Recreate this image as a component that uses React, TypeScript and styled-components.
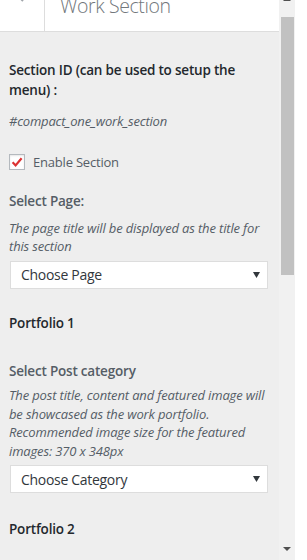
import React from "react";
import styled, { createGlobalStyle } from "styled-components";

const GlobalStyle = createGlobalStyle`
  html, body {
    margin: 0;
    padding: 0;
    background: #ffffff;
  }
  body {
    font-family: "Open Sans", "Noto Sans", sans-serif;
  }
`;

interface SelectFieldProps {
  value: string;
}

const SelectField = ({ value }: SelectFieldProps) => {
  return (
    <SelectBox>
      <SelectValue>{value}</SelectValue>
      <svg width="7" height="6" viewBox="0 0 7 6">
        <path d="M0 0 H7 L3.5 6 Z" fill="#32373c" />
      </svg>
    </SelectBox>
  );
};

const App = () => {
  return (
    <>
      <GlobalStyle />
      <Screen>
        <Panel>
          <Header>
            <BackButton>
              <svg width="44" height="31" viewBox="0 0 44 31">
                <path
                  d="M28 -14 L17 -5 L23 1"
                  fill="none"
                  stroke="#a0a5aa"
                  strokeWidth="2"
                />
              </svg>
            </BackButton>
            <HeaderTitle>Work Section</HeaderTitle>
          </Header>

          <Content>
            <ControlTitle $tone="dark">
              Section ID (can be used to setup the menu) :
            </ControlTitle>
            <IdText>#compact_one_work_section</IdText>

            <CheckRow>
              <CheckBox>
                <svg width="14" height="14" viewBox="0 0 14 14">
                  <path
                    d="M2.6 7.2 L5.6 10.4 L11.6 3.2"
                    fill="none"
                    stroke="#dc3232"
                    strokeWidth="2.2"
                  />
                </svg>
              </CheckBox>
              <CheckLabel>Enable Section</CheckLabel>
            </CheckRow>

            <ControlTitle $tone="muted" $top={22}>
              Select Page:
            </ControlTitle>
            <Description $top={7}>
              The page title will be displayed as the title for this section
            </Description>
            <SelectField value="Choose Page" />

            <SectionHeading $top={24}>Portfolio 1</SectionHeading>

            <ControlTitle $tone="muted" $top={29}>
              Select Post category
            </ControlTitle>
            <Description $top={5}>
              The post title, content and featured image will be showcased as
              the work portfolio. Recommended image size for the featured
              images: 370 x 348px
            </Description>
            <SelectField value="Choose Category" />

            <SectionHeading $top={26}>Portfolio 2</SectionHeading>
          </Content>
        </Panel>

        <ScrollTrack>
          <ArrowSlot>
            <svg width="8" height="5" viewBox="0 0 8 5">
              <path d="M0 5 H8 L4 1 Z" fill="#505050" />
            </svg>
          </ArrowSlot>
          <ScrollThumb />
          <ArrowSlot $bottom>
            <svg width="8" height="5" viewBox="0 0 8 5">
              <path d="M0 0 H8 L4 4 Z" fill="#505050" />
            </svg>
          </ArrowSlot>
        </ScrollTrack>
        <Gutter />
      </Screen>
    </>
  );
};

export default App;

const Screen = styled.div`
  width: 307px;
  height: 560px;
  display: flex;
  overflow: hidden;
`;

const Panel = styled.div`
  width: 279px;
  height: 100%;
  display: flex;
  flex-direction: column;
  background: #eeeeee;
  overflow: hidden;
`;

const Header = styled.div`
  height: 31px;
  flex-shrink: 0;
  display: flex;
  align-items: flex-start;
  background: #ffffff;
  border-bottom: 1px solid #dddddd;
  overflow: hidden;
`;

const BackButton = styled.div`
  width: 44px;
  height: 100%;
  border-right: 1px solid #dddddd;
  flex-shrink: 0;

  svg {
    display: block;
  }
`;

const HeaderTitle = styled.div`
  margin-top: -4px;
  padding-left: 15px;
  font-size: 19.5px;
  font-weight: 300;
  line-height: 20px;
  color: #72777c;
  letter-spacing: -0.4px;
  white-space: nowrap;
`;

const Content = styled.div`
  display: flex;
  flex-direction: column;
  padding: 29px 9px 0 9px;
`;

const ControlTitle = styled.div<{ $tone: "dark" | "muted"; $top?: number }>`
  margin-top: ${({ $top }) => $top ?? 0}px;
  font-size: 13.5px;
  font-weight: 600;
  line-height: 19.5px;
  letter-spacing: -0.2px;
  color: ${({ $tone }) => ($tone === "dark" ? "#23282d" : "#555d66")};
`;

const IdText = styled.div`
  margin-top: 12px;
  font-size: 13px;
  font-style: italic;
  line-height: 19px;
  letter-spacing: -0.2px;
  color: #555d66;
`;

const CheckRow = styled.div`
  margin-top: 23px;
  display: flex;
  align-items: center;
  gap: 8px;
  height: 16px;
`;

const CheckBox = styled.span`
  width: 16px;
  height: 16px;
  box-sizing: border-box;
  display: flex;
  align-items: center;
  justify-content: center;
  background: #ffffff;
  border: 1px solid #b4b9be;
  box-shadow: inset 0 1px 2px rgba(0, 0, 0, 0.1);
`;

const CheckLabel = styled.span`
  font-size: 13px;
  line-height: 16px;
  letter-spacing: -0.2px;
  color: #555d66;
`;

const Description = styled.div<{ $top?: number }>`
  margin-top: ${({ $top }) => $top ?? 0}px;
  font-size: 13px;
  font-style: italic;
  line-height: 18.5px;
  letter-spacing: -0.15px;
  color: #555d66;
`;

const SelectBox = styled.div`
  margin: 5px 2px 0 1px;
  height: 28px;
  box-sizing: border-box;
  display: flex;
  align-items: center;
  justify-content: space-between;
  padding: 0 7px 0 10px;
  background: #ffffff;
  border: 1px solid #dddddd;
`;

const SelectValue = styled.span`
  font-size: 14px;
  letter-spacing: -0.3px;
  color: #32373c;
`;

const SectionHeading = styled.div<{ $top?: number }>`
  margin-top: ${({ $top }) => $top ?? 0}px;
  font-size: 13.5px;
  font-weight: 600;
  line-height: 20px;
  letter-spacing: -0.2px;
  color: #23282d;
`;

const ScrollTrack = styled.div`
  width: 16px;
  height: 100%;
  display: flex;
  flex-direction: column;
  align-items: center;
  background: #f1f1f1;
`;

const ArrowSlot = styled.div<{ $bottom?: boolean }>`
  height: ${({ $bottom }) => ($bottom ? "17px" : "21px")};
  width: 100%;
  display: flex;
  justify-content: center;
  align-items: flex-start;
  padding-top: ${({ $bottom }) => ($bottom ? "4px" : "0")};
  margin-top: ${({ $bottom }) => ($bottom ? "auto" : "-4px")};
  box-sizing: border-box;

  svg {
    display: block;
  }
`;

const ScrollThumb = styled.div`
  width: 13px;
  height: 258px;
  margin-left: 1px;
  background: #c1c1c1;
`;

const Gutter = styled.div`
  flex: 1;
  height: 100%;
  background: #ffffff;
`;
